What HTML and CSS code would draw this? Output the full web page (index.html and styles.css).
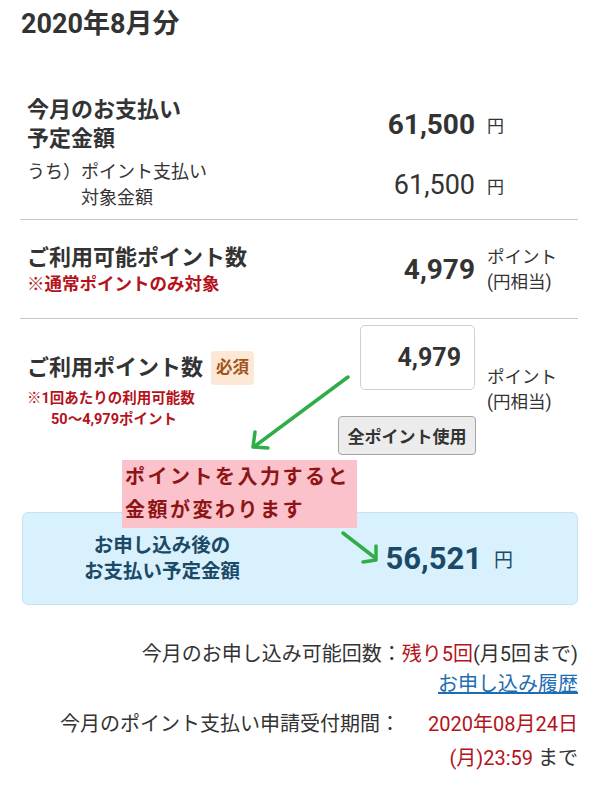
FILE: index.html
```html
<!DOCTYPE html>
<html lang="ja">
  <head>
    <meta charset="UTF-8" />
    <meta name="viewport" content="width=device-width, initial-scale=1.0" />
    <title>ポイント支払い</title>
    <link rel="stylesheet" href="styles.css">
  </head>
  <body>
    <div class="page">
      <h1 class="month">2020年8月分</h1>

      <!-- 今月のお支払い -->
      <div class="summary">
        <div class="row">
          <div class="label-main">今月のお支払い<br>予定金額</div>
          <div class="amount">61,500</div>
          <div class="unit">円</div>
        </div>
        <div class="row sub">
          <div class="label-sub">
            <span>うち）</span>
            <span>ポイント支払い<br>対象金額</span>
          </div>
          <div class="amount normal">61,500</div>
          <div class="unit">円</div>
        </div>
      </div>

      <!-- ご利用可能ポイント -->
      <div class="section available">
        <div class="row">
          <div>
            <div class="label-main">ご利用可能ポイント数</div>
            <div class="note">※通常ポイントのみ対象</div>
          </div>
          <div class="amount">4,979</div>
          <div class="unit-point">ポイント<br>(円相当)</div>
        </div>
      </div>

      <!-- ご利用ポイント入力 -->
      <div class="section use">
        <div class="row">
          <div>
            <div class="use-head">
              <span class="label-main">ご利用ポイント数</span>
              <span class="badge">必須</span>
            </div>
            <div class="small-note">
              ※1回あたりの利用可能数<br>
              <span class="indent">50〜4,979ポイント</span>
            </div>
          </div>
          <div class="use-input">
            <input type="text" class="point-input" value="4,979" />
            <button type="button" class="all-btn">全ポイント使用</button>
          </div>
          <div class="unit-point">ポイント<br>(円相当)</div>
        </div>
      </div>

      <!-- お申し込み後 -->
      <div class="result">
        <div class="result-label">お申し込み後の<br>お支払い予定金額</div>
        <div class="result-amount">56,521</div>
        <div class="result-unit">円</div>
      </div>

      <div class="info">
        <p>今月のお申し込み可能回数：<span class="red">残り5回</span>(月5回まで)<br><a href="#">お申し込み履歴</a></p>
        <p class="period">今月のポイント支払い申請受付期間：<span class="red date">2020年08月24日<br>(月)23:59</span> まで</p>
      </div>

      <!-- 注釈 -->
      <div class="callout">ポイントを入力すると<br>金額が変わります</div>
      <svg class="arrows" width="600" height="791" viewBox="0 0 600 791">
        <g fill="none" stroke="#2fae48" stroke-width="3.5" stroke-linecap="round" stroke-linejoin="round">
          <path d="M348 377 L255 446" />
          <path d="M255 432 L253 447 L268 448" />
          <path d="M343 533 L374 557" />
          <path d="M376 546 L376 560 L363 562" />
        </g>
      </svg>
    </div>
  </body>
</html>
```

FILE: styles.css
```css
/* 全体 */
body {
  margin: 0;
  font-family: Roboto, "Noto Sans CJK JP", sans-serif;
  color: #333;
  background: #fff;
}

.page {
  position: relative;
  padding: 6px 22px 0 20px;
}

.month {
  font-size: 27px;
  line-height: 36px;
  margin: 0 0 0 1px;
}

/* 行 */
.row {
  display: grid;
  grid-template-columns: 1fr auto 91px;
  column-gap: 12px;
  align-items: center;
  padding-left: 7px;
}

.summary {
  margin-top: 53px;
  padding-bottom: 8px;
}

.row.sub {
  margin-top: 6px;
}

.label-main {
  font-size: 22px;
  font-weight: bold;
  line-height: 29px;
}

.label-sub {
  display: flex;
  font-size: 18px;
  line-height: 26px;
}

.amount {
  font-size: 28px;
  font-weight: bold;
  text-align: right;
}

.amount.normal {
  font-size: 27px;
  font-weight: normal;
}

.unit {
  font-size: 17px;
}

.unit-point {
  font-size: 17.5px;
  line-height: 25px;
}

.section {
  border-top: 1px solid #c8c8c8;
}

.available {
  padding: 23px 0 22px;
}

.note {
  color: #b5121b;
  font-weight: bold;
  font-size: 17.5px;
  line-height: 24px;
}

/* ご利用ポイント */
.use {
  padding-top: 6px;
}

.use-head {
  display: flex;
  align-items: center;
  gap: 8px;
}

.badge {
  display: inline-block;
  padding: 0 5px;
  height: 34px;
  line-height: 34px;
  border-radius: 4px;
  background: #fde8d6;
  color: #a0541c;
  font-size: 16.5px;
  font-weight: bold;
}

.small-note {
  margin-top: 3px;
  color: #b5121b;
  font-weight: bold;
  font-size: 14.5px;
  line-height: 21px;
}

.indent {
  padding-left: 24px;
}

.use-input {
  display: flex;
  flex-direction: column;
  align-items: flex-end;
  gap: 26px;
}

.point-input {
  width: 115px;
  height: 65px;
  box-sizing: border-box;
  border: 1px solid #cfcfcf;
  border-radius: 5px;
  padding: 0 13px 0 0;
  text-align: right;
  font-family: inherit;
  font-size: 25px;
  font-weight: bold;
  color: #333;
}

.all-btn {
  width: 138px;
  height: 39px;
  margin-right: -1px;
  padding: 0;
  background: #ececec;
  border: 1px solid #a5a5a5;
  border-radius: 4px;
  font-family: inherit;
  font-size: 17px;
  font-weight: bold;
  color: #333;
}

/* お申し込み後 */
.result {
  display: grid;
  grid-template-columns: 278px 1fr 83px;
  column-gap: 12px;
  align-items: center;
  height: 93px;
  box-sizing: border-box;
  margin: 57px 0 0 2px;
  background: #d9f1fc;
  border: 1px solid #c6e3ef;
  border-radius: 6px;
  color: #1b4a68;
}

.result-label {
  text-align: center;
  font-size: 19.5px;
  font-weight: bold;
  line-height: 26px;
}

.result-amount {
  text-align: right;
  font-size: 31px;
  font-weight: bold;
}

.result-unit {
  font-size: 19px;
}

/* 下部 */
.info {
  margin-top: 34px;
  text-align: right;
  font-size: 20px;
  line-height: 30px;
}

.info p {
  margin: 0;
}

.info a {
  color: #1d6db3;
}

.info .period {
  margin-top: 8px;
  line-height: 34px;
}

.red {
  color: #b5121b;
}

.date {
  margin-left: 28px;
}

/* 注釈 */
.callout {
  position: absolute;
  left: 122px;
  top: 460px;
  width: 235px;
  height: 68px;
  box-sizing: border-box;
  padding: 1px 0 0 3px;
  background: #fbc2cb;
  color: #8e1515;
  font-size: 20px;
  font-weight: bold;
  line-height: 33px;
  letter-spacing: 2.5px;
}

.arrows {
  position: absolute;
  left: 0;
  top: 0;
  pointer-events: none;
}
```
